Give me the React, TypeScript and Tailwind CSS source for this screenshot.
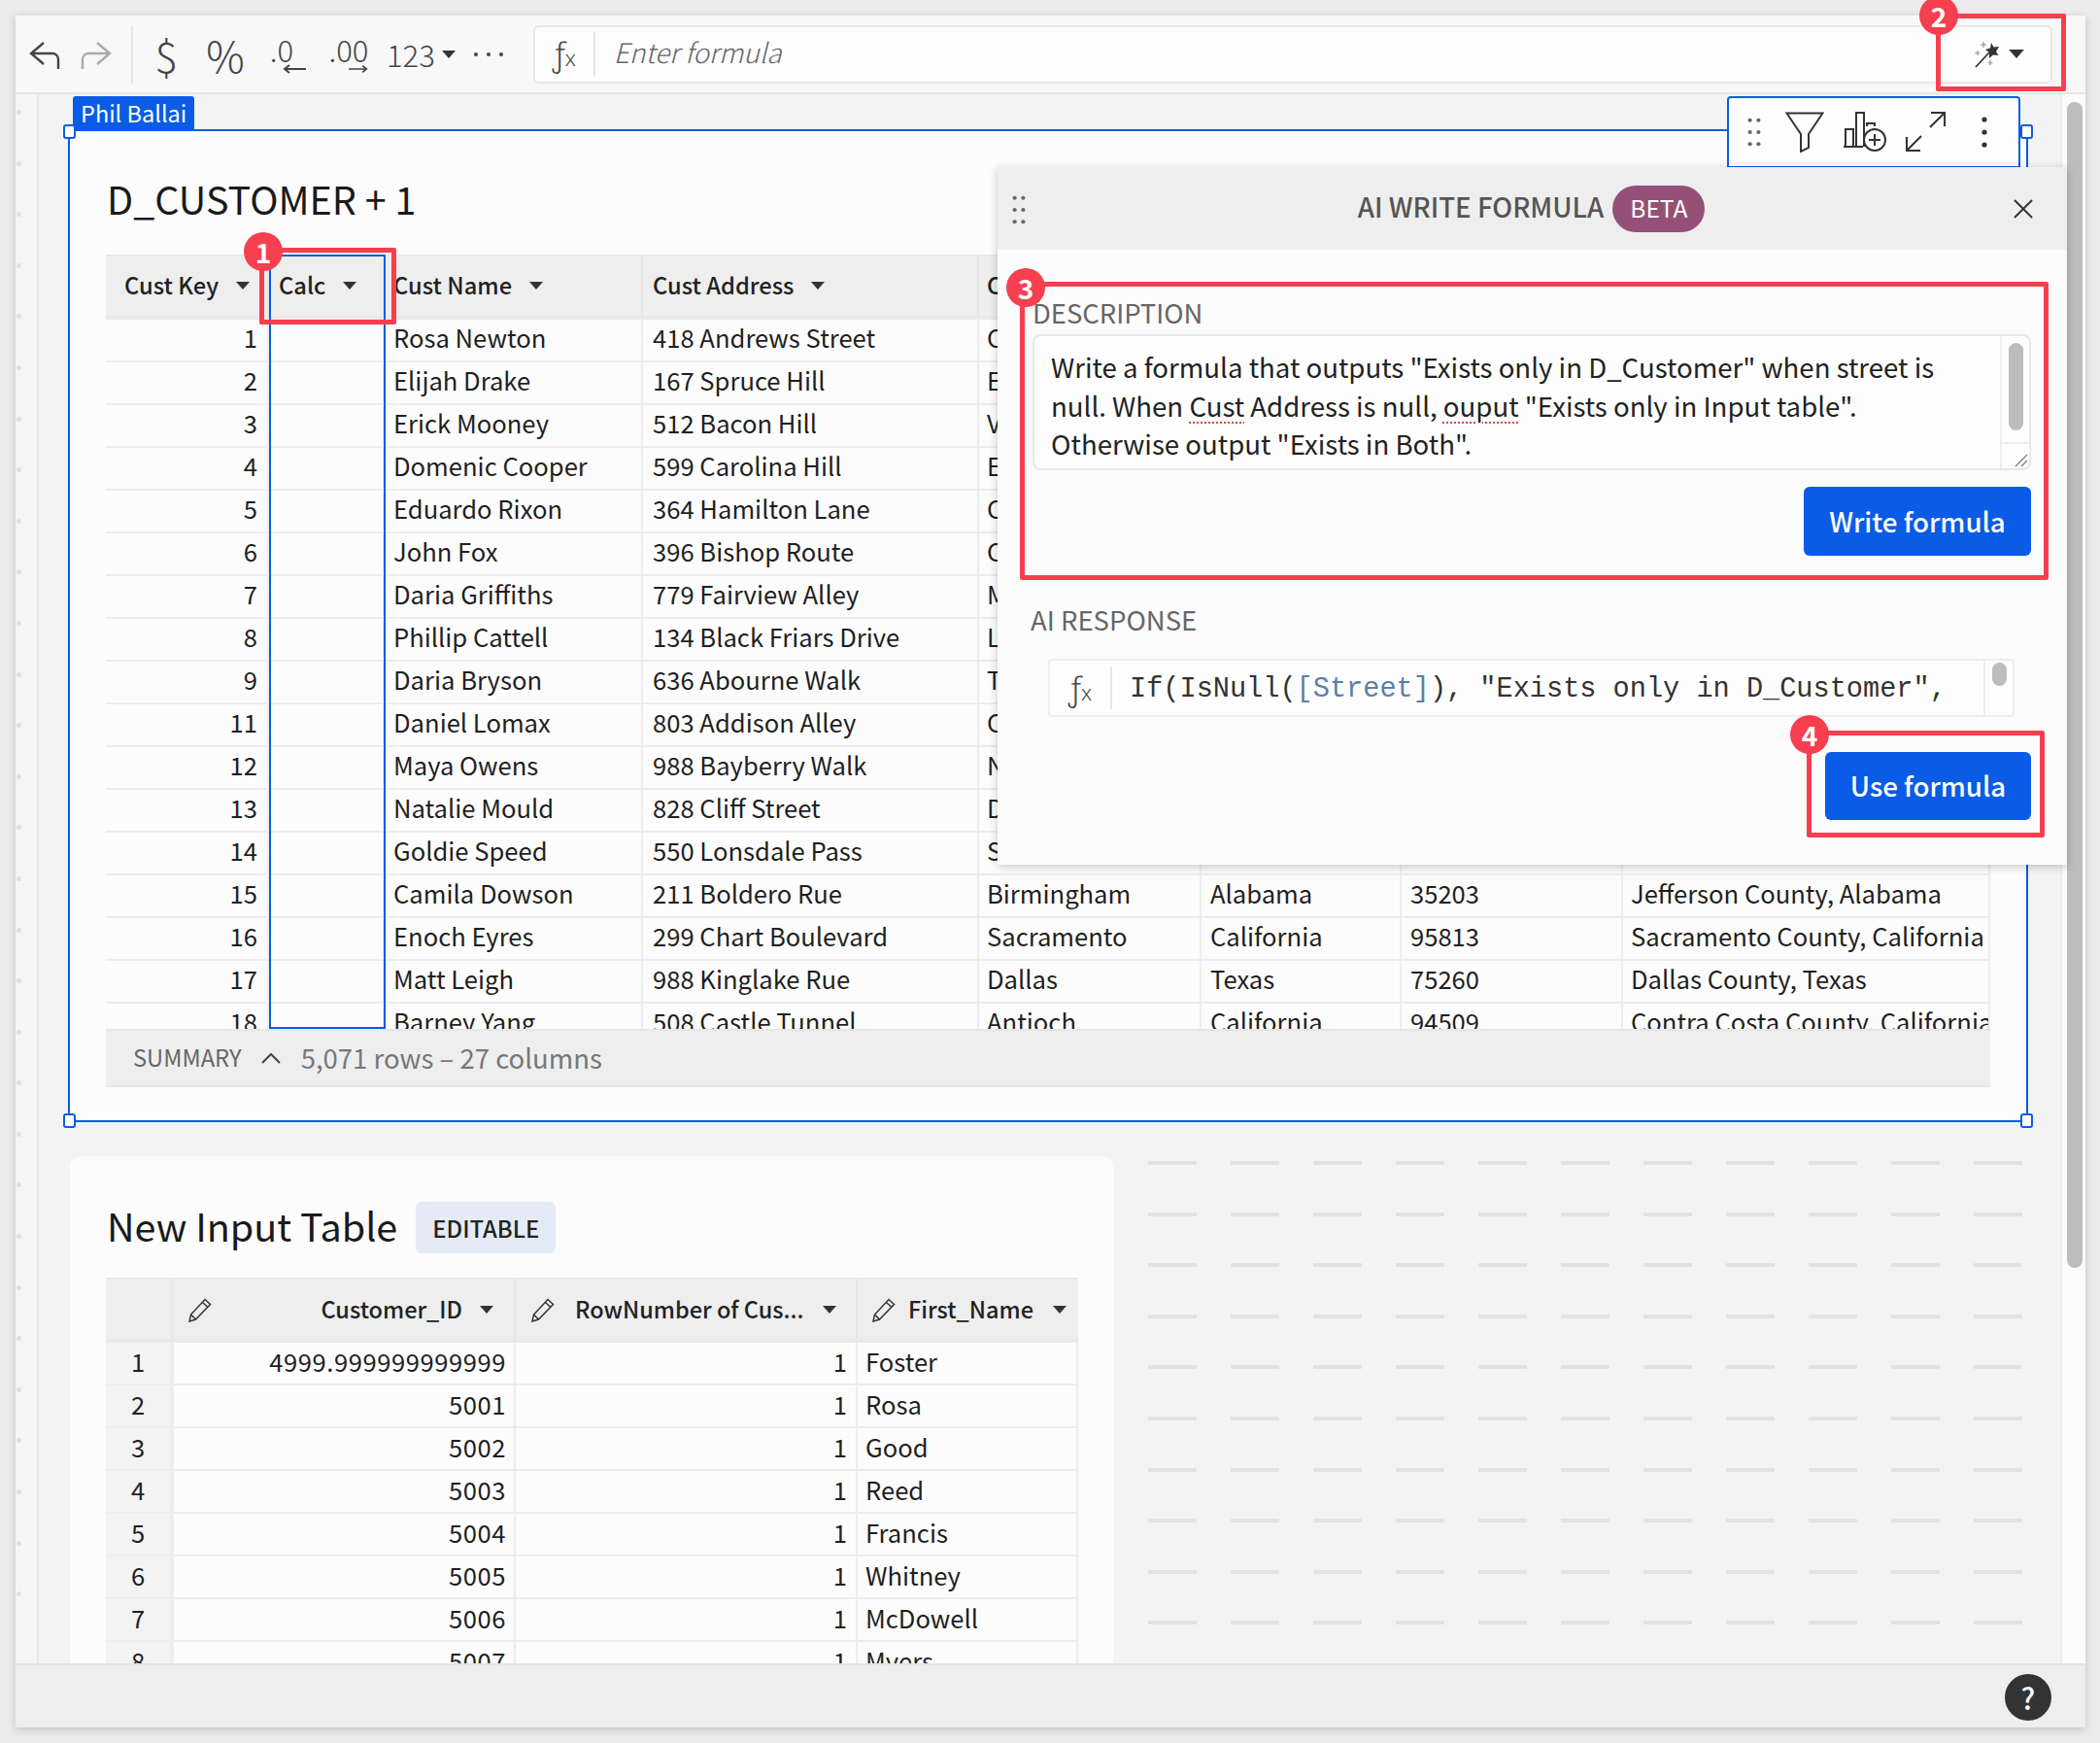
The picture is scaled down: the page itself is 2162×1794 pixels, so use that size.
// rows 1-13 sit behind the AI panel: only the first letter of City shows past its edge
const custRows = [
  ['1', 'Rosa Newton', '418 Andrews Street', 'C', '', '', ''],
  ['2', 'Elijah Drake', '167 Spruce Hill', 'E', '', '', ''],
  ['3', 'Erick Mooney', '512 Bacon Hill', 'V', '', '', ''],
  ['4', 'Domenic Cooper', '599 Carolina Hill', 'E', '', '', ''],
  ['5', 'Eduardo Rixon', '364 Hamilton Lane', 'C', '', '', ''],
  ['6', 'John Fox', '396 Bishop Route', 'C', '', '', ''],
  ['7', 'Daria Griffiths', '779 Fairview Alley', 'M', '', '', ''],
  ['8', 'Phillip Cattell', '134 Black Friars Drive', 'L', '', '', ''],
  ['9', 'Daria Bryson', '636 Abourne Walk', 'T', '', '', ''],
  ['11', 'Daniel Lomax', '803 Addison Alley', 'C', '', '', ''],
  ['12', 'Maya Owens', '988 Bayberry Walk', 'N', '', '', ''],
  ['13', 'Natalie Mould', '828 Cliff Street', 'D', '', '', ''],
  ['14', 'Goldie Speed', '550 Lonsdale Pass', 'S', '', '', ''],
  ['15', 'Camila Dowson', '211 Boldero Rue', 'Birmingham', 'Alabama', '35203', 'Jefferson County, Alabama'],
  ['16', 'Enoch Eyres', '299 Chart Boulevard', 'Sacramento', 'California', '95813', 'Sacramento County, California'],
  ['17', 'Matt Leigh', '988 Kinglake Rue', 'Dallas', 'Texas', '75260', 'Dallas County, Texas'],
  ['18', 'Barney Yang', '508 Castle Tunnel', 'Antioch', 'California', '94509', 'Contra Costa County, California'],
];

const inputRows = [
  ['1', '4999.999999999999', '1', 'Foster'],
  ['2', '5001', '1', 'Rosa'],
  ['3', '5002', '1', 'Good'],
  ['4', '5003', '1', 'Reed'],
  ['5', '5004', '1', 'Francis'],
  ['6', '5005', '1', 'Whitney'],
  ['7', '5006', '1', 'McDowell'],
  ['8', '5007', '1', 'Myers'],
];

const Caret = ({ className = '' }: { className?: string }) => (
  <svg viewBox="0 0 14 8" className={`w-[14px] h-[8px] shrink-0 ${className}`}>
    <path d="M0 0H14L7 8Z" fill="#333" />
  </svg>
);

const DragDots = ({ className = '' }: { className?: string }) => (
  <svg viewBox="0 0 16 34" className={`w-[14px] h-[30px] ${className}`}>
    {[3, 17, 31].map((y) => (
      <g key={y} fill="#666">
        <circle cx="3" cy={y} r="2.4" />
        <circle cx="13" cy={y} r="2.4" />
      </g>
    ))}
  </svg>
);

const Fx = () => (
  <span className="font-['Noto_Sans',sans-serif] text-[#444] flex items-baseline leading-none">
    <span className="text-[33px] font-light">ƒ</span>
    <span className="text-[22px] font-light">x</span>
  </span>
);

const Badge = ({ n, className }: { n: number; className: string }) => (
  <div className={`absolute w-[40px] h-[40px] rounded-full bg-[#f73f4f] text-white text-[28px] font-bold flex items-center justify-center leading-none z-40 ${className}`}>
    {n}
  </div>
);

const Handle = ({ className }: { className: string }) => (
  <div className={`absolute w-[13px] h-[15px] rounded-[3px] bg-white border-2 border-[#0a5ce6] ${className}`} />
);

function Toolbar() {
  return (
    <div className="h-[81px] shrink-0 flex items-center bg-[#f8f8f8] border-b-2 border-[#e6e6e6] pl-2 text-[#444]">
      <svg viewBox="0 0 44 44" className="w-[44px] h-[44px] fill-none stroke-[#444] stroke-[2.4]">
        <path d="M21 10L8 21L21 32M8 21H30a6 6 0 0 1 6 6V37" />
      </svg>
      <svg viewBox="0 0 44 44" className="w-[44px] h-[44px] ml-[9px] fill-none stroke-[#aaa] stroke-[2.4]">
        <path d="M23 10L36 21L23 32M36 21H14a6 6 0 0 0-6 6V37" />
      </svg>
      <div className="w-[2px] h-[60px] bg-[#e6e6e6] ml-[14px]" />
      <span className="w-[44px] ml-[12px] text-center text-[44px] leading-none font-light">$</span>
      <span className="w-[44px] ml-[17px] text-center text-[44px] leading-none font-light">%</span>
      <div className="w-[44px] ml-[20px] flex flex-col items-center">
        <span className="text-[31px] leading-[30px] font-light -ml-[12px]">.0</span>
        <svg viewBox="0 0 24 10" className="w-[24px] h-[10px] ml-[14px] fill-none stroke-[#444] stroke-2"><path d="M24 5H2M7 1L2 5L7 9" /></svg>
      </div>
      <div className="w-[44px] ml-[19px] flex flex-col items-center">
        <span className="text-[31px] leading-[30px] font-light">.00</span>
        <svg viewBox="0 0 24 10" className="w-[20px] h-[10px] ml-[20px] fill-none stroke-[#444] stroke-2"><path d="M0 5H22M17 1L22 5L17 9" /></svg>
      </div>
      <span className="ml-[17px] text-[31px] leading-none font-light">123</span>
      <Caret className="ml-[7px]" />
      <div className="ml-[19px] flex gap-[9px]">
        {[0, 1, 2].map((i) => (
          <div key={i} className="w-[4px] h-[4px] rounded-full bg-[#444]" />
        ))}
      </div>
      <div className="ml-[31px] w-[1564px] h-[60px] shrink-0 flex items-center bg-[#fdfdfd] border-2 border-[#e8e8e8] rounded-md">
        <div className="w-[62px] h-[46px] flex items-center justify-center border-r-2 border-[#e6e6e6]">
          <Fx />
        </div>
        <span className="ml-[19px] pb-[5px] text-[28px] italic font-light text-[#666]">Enter formula</span>
        <div className="ml-auto mr-[27px] flex items-center gap-[9px]">
          <svg viewBox="0 0 26 28" className="w-[26px] h-[28px]">
            <path d="M1 27L15 12" stroke="#333" strokeWidth="1.8" />
            <path d="M17 2L19.5 6.5L25 6L22 11L24.5 15L19 14.5L15 18L15 12L11 9L16 7.5Z" fill="#333" />
            <path d="M9 1V7M6 4H12M3 10V15M0.5 12.5H5.5M16 20V25M13.5 22.5H18.5" stroke="#aaa" strokeWidth="1.6" />
          </svg>
          <Caret className="w-[16px] h-[9px]" />
        </div>
      </div>
    </div>
  );
}

const custCols = [
  { w: 'w-[168px] shrink-0', cell: 'justify-end pr-[10px]' },
  { w: 'w-[119px] shrink-0', cell: '' },
  { w: 'w-[266px] shrink-0', cell: 'pl-[9px]' },
  { w: 'w-[346px] shrink-0', cell: 'pl-[10px]' },
  { w: 'w-[229px] shrink-0', cell: 'pl-[8px]' },
  { w: 'w-[206px] shrink-0', cell: 'pl-[9px]' },
  { w: 'w-[228px] shrink-0', cell: 'pl-[9px]' },
  { w: 'flex-1 min-w-0', cell: 'pl-[8px]' },
];

function CustomerTable() {
  const heads = [
    ['Cust Key', 'pl-[19px]'],
    ['Calc', 'pl-[10px]'],
    ['Cust Name', 'pl-[9px]'],
    ['Cust Address', 'pl-[10px]'],
    ['City', 'pl-[8px]'],
  ];
  return (
    <div className="ml-[37px] w-[1940px] mt-[33px]">
      <div className="relative">
        <div className="flex h-[67px] bg-[#eeeeee] border-t-2 border-b-4 border-[#e9e9e9]">
          {heads.map(([label, pad], i) => (
            <div key={label} className={`${custCols[i].w} ${pad} flex items-center border-r-2 border-[#e6e6e6] pb-[2px] text-[23.7px] font-medium text-[#222]`}>
              {label}
              <Caret className="ml-[18px]" />
            </div>
          ))}
        </div>
        <div className="h-[730px] overflow-hidden">
          {custRows.map((r) => {
            const cells = [r[0], '', r[1], r[2], r[3], r[4], r[5], r[6]];
            return (
              <div key={r[0]} className="flex h-[44px] border-b-2 border-[#ededed] text-[25.6px] text-[#1f1f1f]">
                {cells.map((c, i) => (
                  <div key={i} className={`${custCols[i].w} ${custCols[i].cell} flex items-center border-r-2 border-[#ededed] whitespace-nowrap overflow-hidden pb-[5px]`}>
                    {c}
                  </div>
                ))}
              </div>
            );
          })}
        </div>
        {/* selected Calc column */}
        <div className="absolute left-[168px] top-0 bottom-0 w-[120px] border-2 border-[#0a5ce6] pointer-events-none" />
      </div>
      <div className="h-[60px] flex items-center bg-[#eeeeee] border-t-2 border-b-2 border-[#e6e6e6] pl-[28px] text-[#666]">
        <span className="text-[23.7px]">SUMMARY</span>
        <svg viewBox="0 0 20 12" className="ml-[20px] w-[20px] h-[12px] fill-none stroke-[#444] stroke-2"><path d="M1 11L10 2L19 11" /></svg>
        <span className="ml-[21px] text-[27.5px] text-[#777]">5,071 rows – 27 columns</span>
      </div>
    </div>
  );
}

const inputCols = [
  { w: 'w-[70px]', cell: 'justify-center bg-[#f3f3f3] border-r-4 border-[#ececec]' },
  { w: 'w-[352px]', cell: 'justify-end pr-[8px] border-r-2 tracking-[0.55px]' },
  { w: 'w-[352px]', cell: 'justify-end pr-[9px] border-r-2' },
  { w: 'flex-1', cell: 'pl-[8px] border-r-2' },
];

function InputTable() {
  return (
    <div className="ml-[37px] w-[1001px] mt-[25px]">
      <div className="flex h-[67px] bg-[#eeeeee] border-t-2 border-b-4 border-[#e9e9e9] text-[23.5px] font-medium text-[#222]">
        <div className="w-[70px] border-r-4 border-[#e9e9e9]" />
        <div className="w-[352px] flex items-center border-r-2 border-[#e6e6e6] pl-[14px] pr-[21px]">
          <PencilIcon />
          <span className="ml-auto">Customer_ID</span>
          <Caret className="ml-[18px]" />
        </div>
        <div className="w-[352px] flex items-center border-r-2 border-[#e6e6e6] pl-[15px] pr-[20px]">
          <PencilIcon />
          <span className="ml-[20px] whitespace-nowrap">RowNumber of Cus...</span>
          <Caret className="ml-auto" />
        </div>
        <div className="flex-1 flex items-center pl-[14px] pr-[12px]">
          <PencilIcon />
          <span className="ml-[12px]">First_Name</span>
          <Caret className="ml-auto" />
        </div>
      </div>
      {inputRows.map((r) => (
        <div key={r[0]} className="flex h-[44px] border-b-2 border-[#ededed] text-[25.6px] text-[#1f1f1f]">
          {r.map((c, i) => (
            <div key={i} className={`${inputCols[i].w} ${inputCols[i].cell} flex items-center border-[#ededed] pb-[3px]`}>
              {c}
            </div>
          ))}
        </div>
      ))}
    </div>
  );
}

const PencilIcon = () => (
  <svg viewBox="0 0 26 26" className="w-[26px] h-[26px] shrink-0 fill-none stroke-[#333] stroke-[1.5]">
    <path d="M18 2.5L23.5 7.5L8.5 23L2 25L3.5 18ZM15.5 5.5L21 10.5M3.5 18L8.5 23" />
  </svg>
);

function FormulaPanel() {
  return (
    <div className="absolute left-[1027px] top-[172px] w-[1101px] h-[718px] bg-[#fcfcfc] rounded-t-[4px] shadow-[0_2px_10px_rgba(0,0,0,0.22)] z-20">
      <div className="relative h-[85px] flex items-center justify-center bg-[#eeeeee] pr-[2px]">
        <DragDots className="absolute left-[15px] top-[29px] w-[12px] h-[26px]" />
        <span className="pb-[3px] text-[27.7px] font-medium text-[#555]">AI WRITE FORMULA</span>
        <span className="ml-[9px] h-[48px] px-[18px] rounded-full bg-[#955077] text-white text-[24.5px] flex items-center">BETA</span>
        <svg viewBox="0 0 20 20" className="absolute right-[35px] top-[33px] w-[20px] h-[20px] stroke-[#333] stroke-2">
          <path d="M1 1L19 19M19 1L1 19" />
        </svg>
      </div>
      <div className="flex flex-col pl-[36px] pr-[37px]">
        <div className="mt-[46px] mb-[4px] text-[27.4px] leading-[36px] text-[#666] h-[37px]">DESCRIPTION</div>
        <div className="relative h-[140px] flex bg-[#fdfdfd] border-2 border-[#e8e8e8] rounded-lg">
          <div className="flex-1 pl-[17px] pt-[12px] text-[27.6px] leading-[39.5px] text-[#222]">
            Write a formula that outputs "Exists only in D_Customer" when street is
            <br />
            null. When <span className="underline decoration-dotted decoration-[#e0453f] decoration-2 underline-offset-[6px]">Cust</span> Address is null, <span className="underline decoration-dotted decoration-[#e0453f] decoration-2 underline-offset-[6px]">ouput</span> "Exists only in Input table".
            <br />
            Otherwise output "Exists in Both".
          </div>
          <div className="w-[30px] border-l-2 border-[#eeeeee] pt-[7px] flex flex-col items-center">
            <div className="w-[15px] h-[90px] rounded-full bg-[#bdbdbd]" />
            <div className="w-full mt-[12px] border-t-2 border-[#eeeeee] flex-1 flex items-end justify-end pr-[1px] pb-[1px]">
              <svg viewBox="0 0 14 14" className="w-[14px] h-[14px] stroke-[#777] stroke-[1.2]"><path d="M1 13L13 1M7 13L13 7" /></svg>
            </div>
          </div>
        </div>
        <button className="self-end mt-[17px] w-[234px] h-[71px] rounded-md bg-[#0a5ce6] text-white text-[27.7px] font-medium">Write formula</button>
        <div className="mt-[47px] mb-[2px] text-[27.5px] leading-[36px] text-[#666] -ml-[2px]">AI RESPONSE</div>
        <div className="mt-[21px] ml-[16px] mr-[17px] h-[60px] flex items-center bg-[#fdfdfd] border-2 border-[#eeeeee] rounded-[4px]">
          <div className="w-[64px] h-[44px] flex items-center justify-center border-r-2 border-[#e6e6e6] shrink-0">
            <Fx />
          </div>
          <div className="flex-1 pl-[18px] pt-[5px] font-['Liberation_Mono',monospace] text-[28.6px] text-[#333] whitespace-nowrap">
            If(IsNull(<span className="text-[#5b7fa8]">[Street]</span>), "Exists only in D_Customer",
          </div>
          <div className="w-[30px] h-full border-l-2 border-[#eeeeee] flex justify-center pt-[2px] shrink-0">
            <div className="w-[15px] h-[24px] rounded-full bg-[#bdbdbd]" />
          </div>
        </div>
        <button className="self-end mt-[36px] pb-[1px] w-[212px] h-[70px] rounded-md bg-[#0a5ce6] text-white text-[27.7px] font-medium">Use formula</button>
      </div>
    </div>
  );
}

export default function App() {
  return (
    <div className="relative w-[2162px] h-[1794px] overflow-hidden bg-[#ebebeb] pt-[16px] pl-[16px] font-['Noto_Sans_CJK_SC','Lato',sans-serif]">
      <div className="w-[2131px] h-[1762px] flex flex-col bg-[#f3f3f3] shadow-[0_2px_8px_rgba(0,0,0,0.18)]">
        <Toolbar />

        <div className="flex-1 min-h-0 flex">
          {/* left rail */}
          <div className="w-[24px] shrink-0 border-r-2 border-[#e8e8e8] bg-[#f5f5f5] pt-[16px] flex flex-col gap-[47.6px] overflow-hidden">
            {Array.from({ length: 30 }).map((_, i) => (
              <div key={i} className="w-[5px] h-[5px] shrink-0 ml-[1px] rounded-full bg-[#e0e0e0]" />
            ))}
          </div>

          {/* canvas */}
          <div className="flex-1 min-w-0 overflow-hidden pl-[30px] pt-[36px]">
            <div className="relative w-[2018px] h-[1022px] bg-[#fcfcfc] border-2 border-[#0a5ce6]">
              <div className="absolute left-[3px] -top-[36px] h-[34px] px-[8px] rounded-t-[3px] bg-[#0a5ce6] text-white text-[23.5px] leading-[34px]">Phil Ballai</div>
              <Handle className="-left-[7px] -top-[7px]" />
              <Handle className="-right-[7px] -top-[7px]" />
              <Handle className="-left-[7px] -bottom-[8px]" />
              <Handle className="-right-[7px] -bottom-[8px]" />
              <div className="pl-[38px] pt-[44px] text-[39.5px] leading-[50px] text-[#1a1a1a]">D_CUSTOMER + 1</div>
              <CustomerTable />
            </div>

            <div className="flex mt-[35px]">
              <div className="ml-[2px] w-[1074px] shrink-0 h-[560px] bg-[#fcfcfc] rounded-t-xl">
                <div className="flex items-center pl-[38px] pt-[47px]">
                  <span className="pb-[5px] text-[39.5px] leading-[46px] text-[#1a1a1a]">New Input Table</span>
                  <span className="ml-[19px] h-[53px] w-[144px] flex items-center justify-center rounded-md bg-[#e4ebf7] text-[23.8px] font-medium text-[#222]">EDITABLE</span>
                </div>
                <InputTable />
              </div>
              <div className="ml-[36px] mt-[5px] grid grid-cols-[repeat(11,50px)] gap-x-[35px] gap-y-[48.6px] content-start">
                {Array.from({ length: 110 }).map((_, i) => (
                  <div key={i} className="h-[4px] rounded-[1px] bg-[#e2e2e2]" />
                ))}
              </div>
            </div>
          </div>

          {/* scrollbar */}
          <div className="w-[26px] shrink-0 border-l-2 border-[#ececec] bg-[#fbfbfb] pl-[5px] pt-[8px]">
            <div className="w-[16px] h-[1200px] rounded-full bg-[#bdbdbd]" />
          </div>
        </div>

        <div className="h-[66px] shrink-0 flex items-center justify-end bg-[#eeeeee] border-t-2 border-[#e4e4e4] pr-[35px] pt-[2px]">
          <div className="w-[48px] h-[48px] rounded-full bg-[#333] text-white text-[30px] font-medium flex items-center justify-center">?</div>
        </div>
      </div>

      {/* floating element toolbar */}
      <div className="absolute left-[1778px] top-[99px] w-[302px] h-[74px] flex items-center bg-[#fdfdfd] border-2 border-[#0a5ce6] rounded-t-[4px] z-10">
        <DragDots className="ml-[19px] -mt-[1px]" />
        <svg viewBox="0 0 40 42" className="ml-[25px] w-[40px] h-[42px] fill-none stroke-[#333] stroke-2">
          <path d="M1.5 1.5H38.5L24 23V37L16 41V23Z" />
        </svg>
        <svg viewBox="0 0 46 44" className="ml-[20px] w-[46px] h-[44px] fill-none stroke-[#333] stroke-2">
          <path d="M2 37V19H10V37M13 37V2H21V37M0 37H20M24 16V13H32V16" />
          <circle cx="32" cy="30" r="11" />
          <path d="M32 24V36M26 30H38" />
        </svg>
        <svg viewBox="0 0 42 42" className="ml-[18px] w-[42px] h-[42px] fill-none stroke-[#333] stroke-2">
          <path d="M25 16L40 1M26 1H40V15M16 25L1 40M1 26V40H15" />
        </svg>
        <svg viewBox="0 0 6 32" className="ml-[36px] w-[6px] h-[32px] fill-[#333]">
          <circle cx="3" cy="3" r="2.6" />
          <circle cx="3" cy="16" r="2.6" />
          <circle cx="3" cy="29" r="2.6" />
        </svg>
      </div>

      <FormulaPanel />

      {/* annotation boxes */}
      <div className="absolute left-[267px] top-[255px] w-[141px] h-[79px] border-[5px] border-[#f73f4f] rounded-[2px] z-30" />
      <div className="absolute left-[1993px] top-[14px] w-[134px] h-[80px] border-[5px] border-[#f73f4f] rounded-[2px] z-30" />
      <div className="absolute left-[1050px] top-[290px] w-[1059px] h-[307px] border-[5px] border-[#f73f4f] rounded-[2px] z-30" />
      <div className="absolute left-[1860px] top-[752px] w-[245px] h-[110px] border-[5px] border-[#f73f4f] rounded-[2px] z-30" />
      <Badge n={1} className="left-[251px] top-[239px]" />
      <Badge n={2} className="left-[1976px] -top-[4px]" />
      <Badge n={3} className="left-[1036px] top-[276px]" />
      <Badge n={4} className="left-[1843px] top-[736px]" />
    </div>
  );
}
